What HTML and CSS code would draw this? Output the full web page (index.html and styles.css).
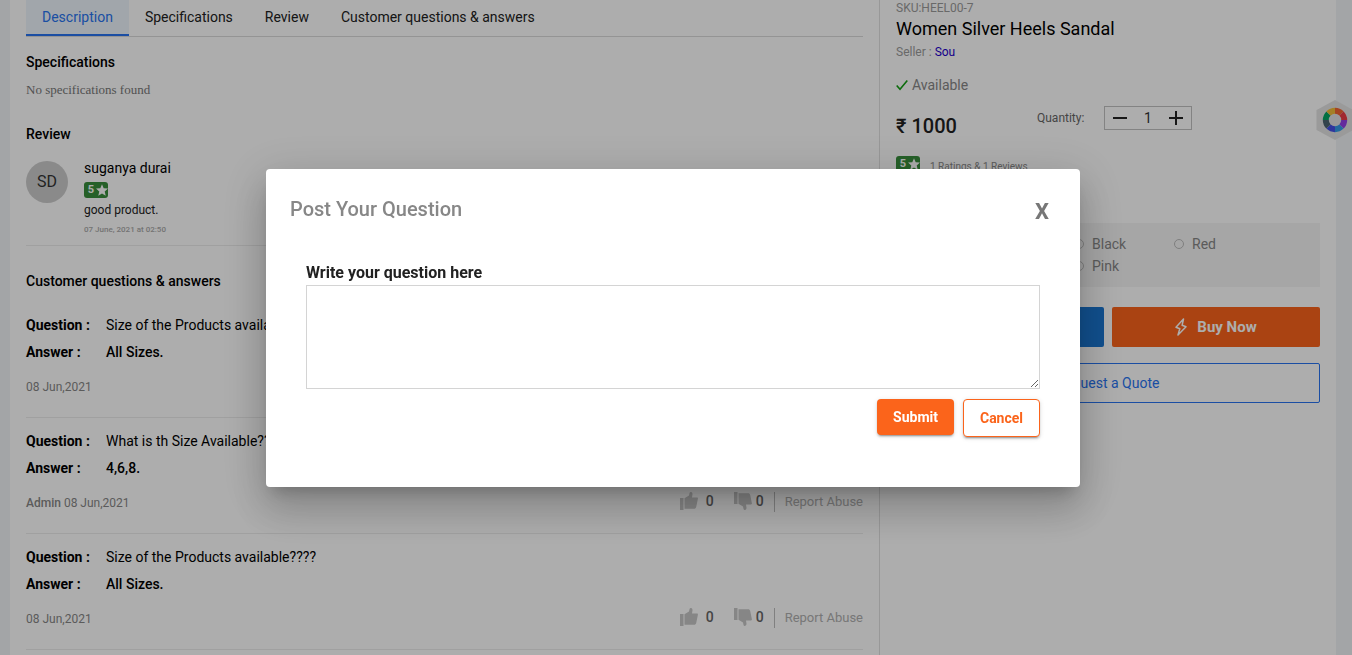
FILE: index.html
```html
<!DOCTYPE html>
<html lang="en">
<head>
  <meta charset="UTF-8" />
  <meta name="viewport" content="width=device-width, initial-scale=1.0" />
  <title>Women Silver Heels Sandal</title>
  <link rel="stylesheet" href="styles.css">
</head>
<body>
  <!-- Shared icons -->
  <svg class="sprite" aria-hidden="true">
    <symbol id="star" viewBox="2 2 20 19">
      <path fill="currentColor" d="M12 17.3 18.2 21l-1.7-7L22 9.200l-7.200-.6L12 2 9.200 8.600 2 9.200l5.500 4.800L5.800 21z"/>
    </symbol>
    <symbol id="thumb" viewBox="0 0 18 18">
      <path fill="currentColor" d="M0 6h3.500v12H0zM4.500 6.200 9 3.500 9.600.8C9.800.2 10.400 0 11 .1c1 .2 1.600 1.100 1.500 2.100L12 5.500h5c.7 0 1 .6.900 1.200L16.200 15c-.3 1.200-1 1.800-2.200 1.800H4.500z"/>
    </symbol>
  </svg>

  <div class="page">
    <!-- Product details -->
    <main class="details">
      <nav class="tabs">
        <a class="tab active" href="#specifications">Description</a>
        <a class="tab" href="#specifications">Specifications</a>
        <a class="tab" href="#review">Review</a>
        <a class="tab" href="#questions">Customer questions &amp; answers</a>
      </nav>

      <h2 class="specs-title" id="specifications">Specifications</h2>
      <p class="no-specs">No specifications found</p>

      <h2 class="review-title" id="review">Review</h2>
      <div class="review">
        <div class="avatar">SD</div>
        <div class="review-body">
          <div class="review-name">suganya durai</div>
          <span class="rating">5<svg class="star"><use href="#star"/></svg></span>
          <div class="review-text">good product.</div>
          <div class="review-date">07 June, 2021 at 02:50</div>
        </div>
      </div>

      <h2 class="questions-title" id="questions">Customer questions &amp; answers</h2>
      <div class="qa">
        <div class="qa-line"><b>Question :</b><span>Size of the Products available????</span></div>
        <div class="qa-line answer"><b>Answer :</b><span>All Sizes.</span></div>
        <div class="qa-meta">
          <span class="qa-date">08 Jun,2021</span>
          <button class="vote" type="button" aria-label="Like"><svg class="thumb"><use href="#thumb"/></svg>0</button>
          <button class="vote down" type="button" aria-label="Dislike"><svg class="thumb"><use href="#thumb"/></svg>0</button>
          <a class="report" href="#">Report Abuse</a>
        </div>
      </div>
      <div class="qa">
        <div class="qa-line"><b>Question :</b><span>What is th Size Available????</span></div>
        <div class="qa-line answer"><b>Answer :</b><span>4,6,8.</span></div>
        <div class="qa-meta">
          <span class="qa-date"><b>Admin</b> 08 Jun,2021</span>
          <button class="vote" type="button" aria-label="Like"><svg class="thumb"><use href="#thumb"/></svg>0</button>
          <button class="vote down" type="button" aria-label="Dislike"><svg class="thumb"><use href="#thumb"/></svg>0</button>
          <a class="report" href="#">Report Abuse</a>
        </div>
      </div>
      <div class="qa">
        <div class="qa-line"><b>Question :</b><span>Size of the Products available????</span></div>
        <div class="qa-line answer"><b>Answer :</b><span>All Sizes.</span></div>
        <div class="qa-meta">
          <span class="qa-date">08 Jun,2021</span>
          <button class="vote" type="button" aria-label="Like"><svg class="thumb"><use href="#thumb"/></svg>0</button>
          <button class="vote down" type="button" aria-label="Dislike"><svg class="thumb"><use href="#thumb"/></svg>0</button>
          <a class="report" href="#">Report Abuse</a>
        </div>
      </div>
    </main>

    <!-- Buying panel -->
    <aside class="buy">
      <div class="sku">SKU:HEEL00-7</div>
      <h1>Women Silver Heels Sandal</h1>
      <div class="seller">Seller : <a href="#">Sou</a></div>
      <div class="stock">
        <svg class="check" viewBox="0 0 12 12"><path d="M.7 6.500 4 10.200 11.300 1.500" fill="none" stroke="#12a012" stroke-width="1.600"/></svg>
        Available
      </div>
      <div class="price-row">
        <div class="price">₹ 1000</div>
        <label class="qty-label" for="qty">Quantity:</label>
        <div class="qty">
          <button type="button" aria-label="Less"><svg viewBox="0 0 14 14"><path d="M0 7h14" stroke="#222" stroke-width="2"/></svg></button>
          <input id="qty" type="text" value="1">
          <button type="button" aria-label="More"><svg viewBox="0 0 14 14"><path d="M0 7h14M7 0v14" stroke="#222" stroke-width="2"/></svg></button>
        </div>
      </div>
      <div class="rating-row">
        <span class="rating">5<svg class="star"><use href="#star"/></svg></span>
        <span class="rating-count">1 Ratings &amp; 1 Reviews</span>
      </div>
      <div class="colors">
        <label><input type="radio" name="color">Black</label>
        <label><input type="radio" name="color">Red</label>
        <label><input type="radio" name="color">Pink</label>
      </div>
      <div class="actions">
        <button class="cart" type="button">Add to Cart</button>
        <button class="now" type="button">
          <svg class="bolt" viewBox="0 0 12 18"><path d="M8.500 1 1 9.300l3.800 1.400L3 17l8-8.200-3.900-1.500z" fill="none" stroke="currentColor" stroke-width="1.500" stroke-linejoin="round"/></svg>
          Buy Now
        </button>
      </div>
      <button class="quote" type="button">Request a Quote</button>
    </aside>
  </div>

  <!-- Floating widget -->
  <div class="widget">
    <svg viewBox="0 0 38 40">
      <path d="M19 0 37.500 10v20L19 40 .5 30V10z" fill="#e4e4e4"/>
      <g fill="none" stroke-width="6" transform="translate(19 20)">
        <path d="M0-9.200A9.200 9.200 0 0 1 6.500-6.500" stroke="#f26532"/>
        <path d="M6.500-6.500A9.200 9.200 0 0 1 9.200 0" stroke="#ee3b44"/>
        <path d="M9.200 0A9.200 9.200 0 0 1 6.500 6.500" stroke="#9440e8"/>
        <path d="M6.500 6.500A9.200 9.200 0 0 1 0 9.200" stroke="#359de8"/>
        <path d="M0 9.200A9.200 9.200 0 0 1-6.500 6.500" stroke="#4650e8"/>
        <path d="M-6.500 6.500A9.200 9.200 0 0 1-9.200 0" stroke="#4c6470"/>
        <path d="M-9.200 0A9.200 9.200 0 0 1-6.500-6.500" stroke="#04a662"/>
        <path d="M-6.500-6.500A9.200 9.200 0 0 1 0-9.200" stroke="#f2bd38"/>
      </g>
    </svg>
  </div>

  <!-- Question dialog -->
  <div class="overlay">
    <div class="dialog" role="dialog" aria-labelledby="dialogTitle">
      <div class="dialog-head">
        <h2 id="dialogTitle">Post Your Question</h2>
        <button class="close" type="button">X</button>
      </div>
      <form class="dialog-form">
        <label for="question">Write your question here</label>
        <textarea id="question"></textarea>
        <div class="dialog-actions">
          <button class="submit" type="submit">Submit</button>
          <button class="cancel" type="button">Cancel</button>
        </div>
      </form>
    </div>
  </div>
</body>
</html>
```
FILE: styles.css
```css
/* Base styling */
* {
  box-sizing: border-box;
}
body {
  margin: 0;
  height: 100vh;
  overflow: hidden;
  background-color: #f1f3f6;
  color: #000;
  font-family: Roboto, "Liberation Sans", sans-serif;
  font-size: 14px;
  line-height: 20px;
}
h1, h2, p {
  margin: 0;
}
h2 {
  font-size: 14px;
  font-weight: 500;
}
a {
  text-decoration: none;
}
button, input, textarea {
  font-family: inherit;
  font-size: 14px;
}
button {
  padding: 0;
  border: none;
  background: none;
  cursor: pointer;
}
b {
  font-weight: 500;
}
.sprite {
  display: none;
}
.page {
  display: grid;
  grid-template-columns: 1fr 456px;
  min-height: 100vh;
  margin: 0 16px 0 10px;
  background: #fff;
}
.details {
  padding: 0 16px;
  border-right: 1px solid #e0e0e0;
}

/* Tabs */
.tabs {
  display: flex;
  border-bottom: 1px solid #dadada;
}
.tab {
  padding: 0 16px;
  border-bottom: 2px solid transparent;
  color: #212121;
  line-height: 34px;
}
.tab.active {
  background: #edf5fc;
  border-color: #2874f0;
  color: #2874f0;
}

/* Specifications and review */
.specs-title {
  margin-top: 15px;
}
.no-specs {
  margin-top: 8px;
  color: #787878;
  font-family: "Liberation Serif", serif;
  font-size: 13px;
}
.review-title {
  margin-top: 24px;
}
.review {
  display: flex;
  gap: 16px;
  margin-top: 14px;
  padding-bottom: 10px;
  border-bottom: 1px solid #ececec;
}
.avatar {
  width: 42px;
  height: 42px;
  margin-top: 3px;
  border-radius: 50%;
  background: #ccc;
  color: #333;
  font-size: 16px;
  line-height: 42px;
  text-align: center;
}
.rating {
  display: flex;
  align-items: center;
  justify-content: flex-end;
  gap: 2px;
  width: 24px;
  height: 16px;
  margin-top: 4px;
  border-radius: 3px;
  background: #388e3c;
  color: #fff;
  font-size: 11px;
  font-weight: 700;
}
.star {
  width: 12px;
  height: 12px;
}
.review-text {
  margin-top: 2px;
  color: #212121;
  font-size: 12px;
}
.review-date {
  margin-top: 5px;
  color: #aaa;
  font-size: 8px;
  font-weight: 500;
  line-height: 10px;
}

/* Questions */
.questions-title {
  margin: 25px 0 11px;
}
.qa {
  padding: 13px 0 19px;
  border-bottom: 1px solid #ececec;
}
.qa-line {
  display: flex;
}
.qa-line b {
  width: 80px;
  font-weight: 700;
}
.answer {
  margin-top: 7px;
  font-weight: 500;
}
.qa-meta {
  display: flex;
  align-items: flex-start;
  height: 24px;
  margin-top: 12px;
}
.qa-date {
  flex: 1;
  padding-top: 3px;
  color: #878787;
  font-size: 12px;
}
.vote {
  display: flex;
  align-items: center;
  gap: 8px;
  height: 22px;
  margin-right: 20px;
  color: #666;
  font-weight: 500;
}
.thumb {
  width: 18px;
  height: 18px;
  color: #c6c6c6;
}
.vote.down {
  gap: 4px;
  margin-right: 10px;
}
.down .thumb {
  transform: scaleY(-1);
}
.report {
  margin-top: 2px;
  padding-left: 10px;
  border-left: 1px solid #bdbdbd;
  color: #b0b0b0;
  font-size: 13px;
}

/* Buying panel */
.buy {
  padding: 0 16px;
}
.sku, .seller {
  color: #9b9b9b;
  font-size: 12px;
  line-height: 16px;
}
h1 {
  font-size: 18px;
  font-weight: 400;
  line-height: 26px;
}
.seller {
  margin-top: 2px;
}
.seller a {
  color: #2200cc;
}
.stock {
  display: flex;
  align-items: center;
  gap: 4px;
  margin-top: 15px;
  color: #878787;
}
.check {
  width: 12px;
  height: 12px;
}
.price-row {
  display: flex;
  align-items: flex-start;
  margin-top: 11px;
}
.price {
  width: 141px;
  padding-top: 8px;
  color: #212121;
  font-size: 20px;
  font-weight: 500;
  line-height: 24px;
}
.qty-label {
  width: 67px;
  color: #666;
  font-size: 12px;
  line-height: 24px;
}
.qty {
  display: flex;
  align-items: center;
  justify-content: space-between;
  width: 88px;
  height: 24px;
  padding: 0 8px;
  border: 1px solid #c2c2c2;
}
.qty button {
  display: flex;
}
.qty svg {
  width: 14px;
  height: 14px;
}
.qty input {
  width: 24px;
  padding: 0;
  border: none;
  background: none;
  color: #333;
  text-align: center;
}
.rating-row {
  display: flex;
  align-items: flex-start;
  gap: 10px;
  margin-top: 14px;
}
.rating-count {
  padding-top: 5px;
  color: #878787;
  font-size: 10px;
}
.colors {
  display: grid;
  grid-template-columns: 100px 100px;
  row-gap: 2px;
  margin-top: 46px;
  padding: 11px 0 11px 178px;
  background: #f5f5f5;
  color: #878787;
}
.colors label {
  display: flex;
  align-items: center;
  gap: 8px;
}
.colors input {
  appearance: none;
  width: 10px;
  height: 10px;
  margin: 0;
  border: 1px solid #bbb;
  border-radius: 50%;
}
.actions {
  display: grid;
  grid-template-columns: 1fr 1fr;
  gap: 8px;
  margin-top: 20px;
}
.cart, .now {
  display: flex;
  align-items: center;
  justify-content: center;
  gap: 10px;
  height: 40px;
  border-radius: 2px;
  background: #1976d2;
  color: #fff;
  font-size: 15px;
  font-weight: 700;
}
.now {
  background: #fb641b;
}
.bolt {
  width: 12px;
  height: 18px;
}
.quote {
  width: 100%;
  height: 40px;
  margin-top: 16px;
  border: 1px solid #2874f0;
  border-radius: 2px;
  color: #2874f0;
}

/* Floating widget */
.widget {
  position: fixed;
  top: 100px;
  right: -2px;
  width: 38px;
  height: 40px;
}

/* Question dialog */
.overlay {
  position: fixed;
  inset: 0;
  display: flex;
  align-items: center;
  justify-content: center;
  padding-right: 6px;
  background: rgba(0, 0, 0, 0.32);
}
.dialog {
  width: 100%;
  max-width: 814px;
  padding: 24px 24px 50px;
  border-radius: 4px;
  background: #fff;
  box-shadow: 0 11px 15px -7px rgba(0,0,0,0.2), 0 24px 38px 3px rgba(0,0,0,0.14), 0 9px 46px 8px rgba(0,0,0,0.12);
}
.dialog-head {
  display: flex;
  justify-content: space-between;
}
.dialog-head h2 {
  color: #878787;
  font-size: 20px;
  line-height: 32px;
}
.close {
  margin: 6px 7px 0 0;
  color: #777;
  font-size: 22px;
  font-weight: 700;
  line-height: 26px;
}
.dialog-form {
  margin-top: 38px;
  padding: 0 16px;
}
.dialog-form label {
  display: block;
  color: #212121;
  font-size: 16px;
  font-weight: 700;
}
.dialog-form textarea {
  display: block;
  width: 100%;
  height: 104px;
  margin-top: 2px;
  border: 1px solid #d4d4d4;
  outline: none;
  resize: vertical;
}
.dialog-actions {
  display: flex;
  align-items: flex-start;
  justify-content: flex-end;
  gap: 9px;
  margin-top: 10px;
}
.submit, .cancel {
  width: 77px;
  height: 36px;
  border-radius: 4px;
  background: #fb641b;
  color: #fff;
  font-weight: 700;
  box-shadow: 0 3px 1px -2px rgba(0,0,0,0.2), 0 2px 2px 0 rgba(0,0,0,0.14), 0 1px 5px 0 rgba(0,0,0,0.12);
}
.cancel {
  height: 38px;
  border: 1px solid #fb641b;
  background: #fff;
  color: #fb641b;
}
```
